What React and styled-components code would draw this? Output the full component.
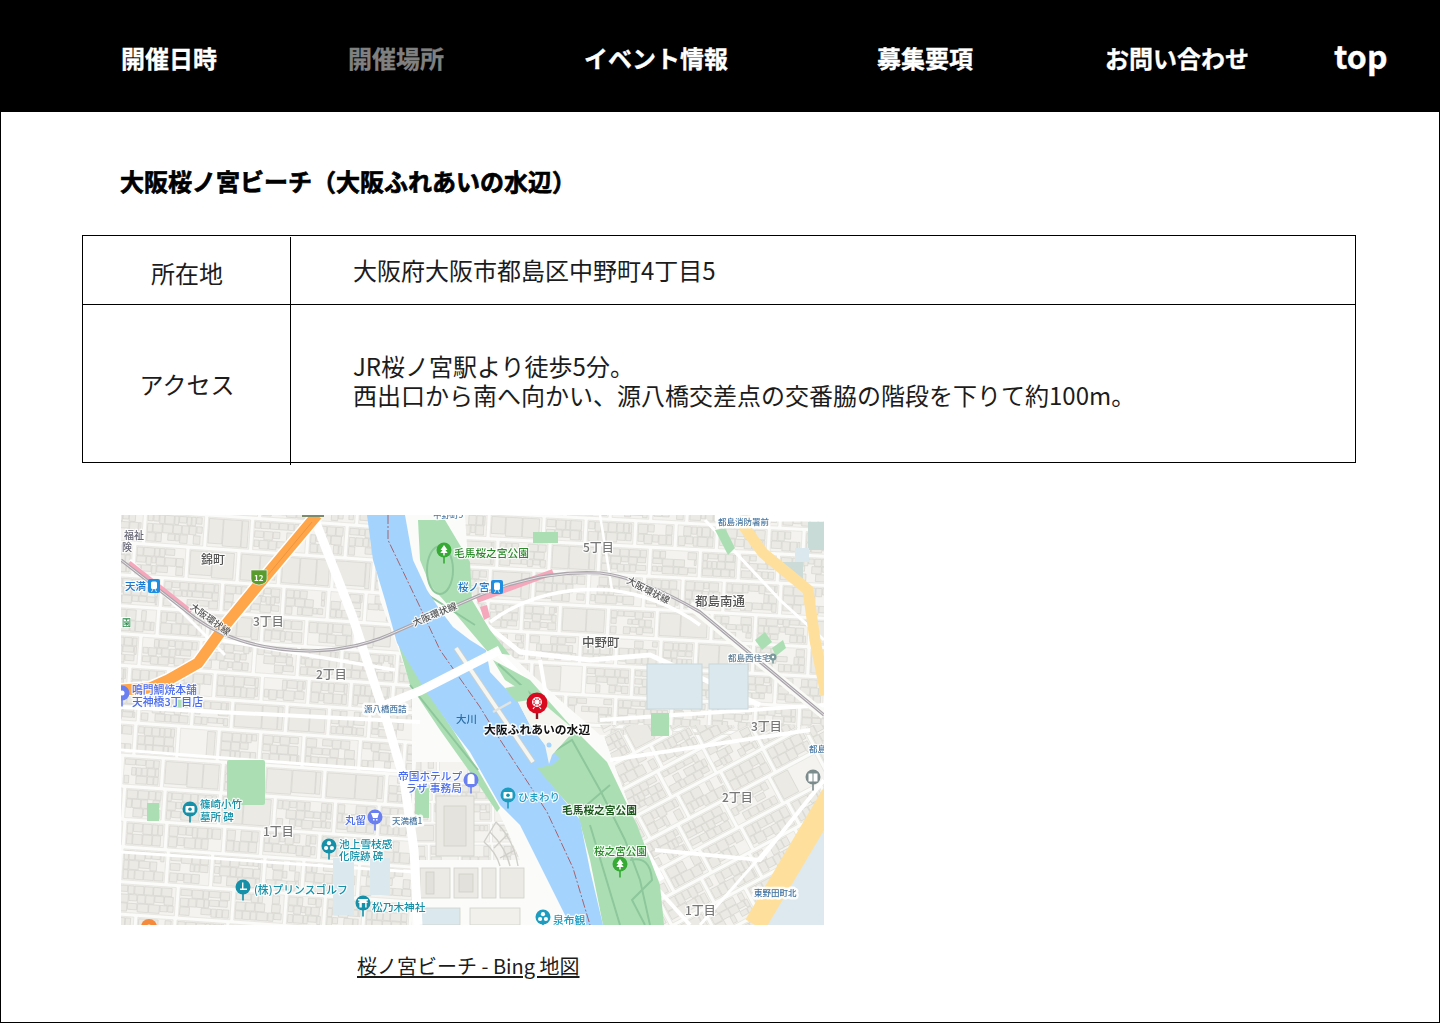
import React, { useMemo } from "react";
import styled, { createGlobalStyle } from "styled-components";

const FONT = `"Noto Sans CJK JP", "Noto Sans", sans-serif`;

const Global = createGlobalStyle`
  html, body { margin: 0; padding: 0; background: #fff; }
  body { font-family: ${FONT}; color: #000; }
`;

const Page = styled.div`
  box-sizing: border-box;
  width: 1440px;
  height: 1023px;
  border: solid #000;
  border-width: 0 1px 1px 1px;
  overflow: hidden;
`;

const Nav = styled.nav`
  display: grid;
  grid-template-columns: 227px 236px 293px 228px 229px 1fr;
  align-items: center;
  height: 112px;
  margin: 0 -1px;
  padding: 3px 0 0 121px;
  box-sizing: border-box;
  background: #000;
`;

const NavLink = styled.a`
  font-size: ${(p) => (p.$large ? "32px" : "24px")};
  font-weight: 700;
  line-height: 36px;
  white-space: nowrap;
  margin-top: ${(p) => (p.$large ? "-5px" : "0")};
  color: ${(p) => (p.$current ? "#808080" : "#fff")};
  -webkit-text-stroke: 0.3px ${(p) => (p.$current ? "#808080" : "#fff")};
`;

const Title = styled.h2`
  margin: 51px 0 37px 119px;
  font-size: 24px;
  font-weight: 700;
  line-height: 35px;
  -webkit-text-stroke: 0.7px #000;
`;

const InfoTable = styled.section`
  position: relative;
  box-sizing: border-box;
  width: 1274px;
  margin-left: 81px;
  border: 1px solid #000;

  &::before {
    content: "";
    position: absolute;
    left: 207px;
    top: 1px;
    bottom: -3px;
    width: 1px;
    background: #000;
  }
`;

const InfoRow = styled.div`
  display: grid;
  grid-template-columns: 208px 1fr;
  height: ${(p) => p.$h}px;
  & + & { border-top: 1px solid #000; }
`;

const InfoLabel = styled.div`
  display: flex;
  align-items: center;
  justify-content: center;
  padding: ${(p) => p.$offset || 0}px 0 ${(p) => p.$lift || 0}px;
  font-size: 24px;
  line-height: 29px;
  font-weight: 400;
  color: #1c1c1c;
`;

const InfoValue = styled.div`
  display: flex;
  flex-direction: column;
  justify-content: center;
  padding: 0 0 ${(p) => p.$lift || 0}px 62px;
  font-size: 24px;
  line-height: 29px;
  font-weight: 400;
  color: #1c1c1c;
`;

const MapFigure = styled.figure`
  margin: 52px 0 0 120px;
`;

const MapFrame = styled.svg`
  display: block;
  width: 703px;
  height: 410px;
  filter: blur(0.35px);
`;

const MapLabel = styled.text`
  font-family: ${FONT};
  font-size: ${(p) => p.$s || 11}px;
  font-weight: ${(p) => p.$w || 500};
  fill: ${(p) => p.$c || "#555"};
  stroke: #fff;
  stroke-opacity: ${(p) => (p.$halo === false ? 0 : 0.85)};
  stroke-width: ${(p) => p.$sw || 2.4}px;
  paint-order: stroke;
  stroke-linejoin: round;
`;

const MapLink = styled.a`
  display: inline-block;
  margin: 26px 0 0 236px;
  font-size: 20px;
  line-height: 30px;
  font-weight: 400;
  color: #1c1c1c;
  text-decoration: underline;
  text-underline-offset: 2px;
`;

function rng(seed) {
  let a = seed;
  return () => {
    a |= 0; a = (a + 0x6d2b79f5) | 0;
    let t = Math.imul(a ^ (a >>> 15), 1 | a);
    t = (t + Math.imul(t ^ (t >>> 7), 61 | t)) ^ t;
    return ((t ^ (t >>> 14)) >>> 0) / 4294967296;
  };
}

const rect = (x, y, w, h) =>
  `M${x.toFixed(1)} ${y.toFixed(1)}h${w.toFixed(1)}v${h.toFixed(1)}h${(-w).toFixed(1)}z`;

function buildZone({ x0, y0, x1, y1, bw, bh, gap, seed, dense = 1 }) {
  const r = rng(seed);
  let blocks = "";
  let houses = "";
  for (let y = y0; y < y1; ) {
    const h = bh * (0.8 + r() * 0.4);
    for (let x = x0 + r() * 12 - 6; x < x1; ) {
      const w = bw * (0.72 + r() * 0.55);
      blocks += rect(x, y, w, h);
      const large = r() < 0.12;
      const rowsN = large ? 1 : h > 25 ? 3 : 2;
      const rh = (h - 2) / rowsN;
      for (let i = 0; i < rowsN; i++) {
        for (let cx = x + 1; cx < x + w - 3; ) {
          const cw = Math.min((large ? 14 : 4.5) + r() * (large ? 16 : 7), x + w - cx - 1);
          if (r() < 0.9 * dense) {
            houses += rect(cx, y + 1 + i * rh + 0.3, cw - 0.7, rh - 0.7 - (r() < 0.3 ? 2 : 0));
          }
          cx += cw;
        }
      }
      x += w + gap;
    }
    y += h + gap;
  }
  return { blocks, houses };
}

const ZONES = [
  { id: "zw", clip: "121,515 370,515 380,600 398,648 412,690 412,925 121,925", rot: "4 260 720",
    x0: 90, y0: 490, x1: 440, y1: 960, bw: 46, bh: 27, gap: 4, seed: 11 },
  { id: "ze", clip: "465,515 824,515 824,735 600,735 560,700 500,645 470,590", rot: "3 640 620",
    x0: 440, y0: 495, x1: 860, y1: 760, bw: 42, bh: 25, gap: 4, seed: 27 },
  { id: "zr", clip: "600,725 824,725 824,925 664,925 640,835", rot: "-28 720 830",
    x0: 520, y0: 660, x1: 940, y1: 1010, bw: 40, bh: 27, gap: 4, seed: 73 },
  { id: "zs", clip: "416,762 470,762 500,815 520,860 412,860", rot: "0 470 800",
    x0: 412, y0: 760, x1: 520, y1: 870, bw: 24, bh: 20, gap: 3, seed: 91, dense: 0.8 },
];

const STREETS = [
  { d: "M313 515 L352 615 L388 725 L404 780 L414 850 L418 925", w: 9 },
  { d: "M121 707 L300 716 L420 722", w: 4 },
  { d: "M121 750 L410 772", w: 3 },
  { d: "M121 852 L415 872", w: 3 },
  { d: "M220 640 L395 670", w: 3.5 },
  { d: "M130 560 L225 655", w: 3 },
  { d: "M480 620 L520 652 L590 660 L650 655 L760 705", w: 5 },
  { d: "M490 622 Q540 585 610 590 Q660 596 700 625", w: 3.5 },
  { d: "M500 655 L585 745 L662 880", w: 6 },
  { d: "M540 660 L560 780 L690 925", w: 4 },
  { d: "M600 720 L824 705", w: 4 },
  { d: "M610 760 L810 730", w: 4 },
  { d: "M655 850 L760 860 L824 780", w: 4 },
  { d: "M700 925 L775 840", w: 3 },
  { d: "M705 520 L780 600 L824 640", w: 3 },
  { d: "M600 515 L612 590", w: 2.5 },
  { d: "M715 515 L835 515", w: 13 },
];

const LABELS = [
  { x: 124, y: 539, t: "福祉", c: "#667", s: 10 },
  { x: 122, y: 551, t: "険", c: "#667", s: 10 },
  { x: 201, y: 564, t: "錦町", s: 12, c: "#555" },
  { x: 125, y: 590, t: "天満", s: 10.5, c: "#1f78cf" },
  { x: 253, y: 626, t: "3丁目", s: 12, c: "#777" },
  { x: 316, y: 679, t: "2丁目", s: 12, c: "#777" },
  { x: 132, y: 694, t: "鳴門鯛焼本舗", s: 10.8, c: "#4a6bf0" },
  { x: 132, y: 706, t: "天神橋3丁目店", s: 10.8, c: "#4a6bf0" },
  { x: 364, y: 712, t: "源八橋西詰", s: 8.5, c: "#4c7aa5", sw: 5 },
  { x: 456, y: 723, t: "大川", s: 10.5, c: "#2c6ea5", halo: false },
  { x: 454, y: 557, t: "毛馬桜之宮公園", s: 10.7, c: "#2a8a2a" },
  { x: 458, y: 591, t: "桜ノ宮", s: 10.5, c: "#1f78cf" },
  { x: 433, y: 518, t: "中野町5", s: 8.5, c: "#4c7aa5" },
  { x: 583, y: 552, t: "5丁目", s: 12, c: "#777" },
  { x: 718, y: 525, t: "都島消防署前", s: 8.5, c: "#4c7aa5", sw: 5 },
  { x: 695, y: 606, t: "都島南通", s: 12.5, c: "#555" },
  { x: 582, y: 647, t: "中野町", s: 12.5, c: "#555" },
  { x: 728, y: 661, t: "都島西住宅", s: 8.5, c: "#5f7f98" },
  { x: 751, y: 731, t: "3丁目", s: 12, c: "#777" },
  { x: 809, y: 752, t: "都島", s: 8.5, c: "#4c7aa5" },
  { x: 722, y: 802, t: "2丁目", s: 12, c: "#777" },
  { x: 685, y: 915, t: "1丁目", s: 12, c: "#777" },
  { x: 263, y: 836, t: "1丁目", s: 12, c: "#777" },
  { x: 484, y: 734, t: "大阪ふれあいの水辺", s: 11.8, c: "#111", w: 700, sw: 3 },
  { x: 398, y: 780, t: "帝国ホテルプ", s: 10.7, c: "#4a6bf0" },
  { x: 406, y: 792, t: "ラザ 事務局", s: 10.7, c: "#4a6bf0" },
  { x: 518, y: 801, t: "ひまわり", s: 10.5, c: "#1d9cc0" },
  { x: 562, y: 814, t: "毛馬桜之宮公園", s: 10.7, c: "#1b561b", w: 700 },
  { x: 594, y: 855, t: "桜之宮公園", s: 10.6, c: "#2a8a2a" },
  { x: 754, y: 896, t: "東野田町北", s: 8.5, c: "#3d70a3", sw: 5 },
  { x: 553, y: 924, t: "泉布観", s: 10.7, c: "#1d9cc0" },
  { x: 200, y: 808, t: "篠崎小竹", s: 10.5, c: "#1590a8" },
  { x: 200, y: 821, t: "墓所 碑", s: 10.5, c: "#1590a8" },
  { x: 345, y: 824, t: "丸留", s: 10.5, c: "#4a6bf0" },
  { x: 392, y: 824, t: "天満橋1", s: 8.5, c: "#4c7aa5", sw: 5 },
  { x: 339, y: 848, t: "池上雪枝感", s: 10.7, c: "#1590a8" },
  { x: 339, y: 860, t: "化院跡 碑", s: 10.5, c: "#1590a8" },
  { x: 254, y: 894, t: "(株)プリンスゴルフ", s: 10.8, c: "#1590a8" },
  { x: 372, y: 911, t: "松乃木神社", s: 10.7, c: "#1590a8" },
];

const RAIL_NAMES = [
  { x: 210, y: 620, a: 36 },
  { x: 435, y: 615, a: -22 },
  { x: 648, y: 591, a: 27 },
];

const PINS = [
  { x: 444, y: 550, r: 7.5, c: "#37a935", kind: "tree" },
  { x: 620, y: 864, r: 7.5, c: "#37a935", kind: "tree" },
  { x: 471, y: 780, r: 7.5, c: "#6b80f0", kind: "house" },
  { x: 375, y: 817, r: 7.5, c: "#6b80f0", kind: "cart" },
  { x: 122, y: 693, r: 7.5, c: "#6b80f0", kind: "dot" },
  { x: 508, y: 795, r: 7.5, c: "#1d9cc0", kind: "cam" },
  { x: 190, y: 809, r: 7.5, c: "#1590a8", kind: "cam" },
  { x: 329, y: 846, r: 7.5, c: "#1590a8", kind: "clover" },
  { x: 543, y: 917, r: 7.5, c: "#1d9cc0", kind: "clover" },
  { x: 243, y: 887, r: 7.5, c: "#1590a8", kind: "golf" },
  { x: 363, y: 903, r: 7.5, c: "#1590a8", kind: "gate" },
  { x: 813, y: 777, r: 7.5, c: "#7c8b8c", kind: "book" },
  { x: 149, y: 927, r: 8, c: "#f58a3c", kind: "dot" },
  { x: 773, y: 657, r: 3.5, c: "#7c9a9c", kind: "none", stem: 3 },
];

function PinGlyph({ kind, x, y }) {
  switch (kind) {
    case "tree":
      return <path d={`M${x} ${y - 5}l3.5 5h-2l2.2 3h-3v2.5h-1.4V${y + 3}h-3l2.2-3h-2z`} fill="#fff" />;
    case "house":
      return <path d={`M${x - 3.5} ${y + 4}v-6a3.5 4 0 0 1 7 0v6z`} fill="#fff" />;
    case "cart":
      return <path d={`M${x - 4} ${y - 4}h8l-1.5 5h-4.5zM${x - 2} ${y + 2}h1.5v1.5h-1.5zM${x + 1} ${y + 2}h1.5v1.5h-1.5z`} fill="#fff" />;
    case "cam":
      return (
        <g>
          <rect x={x - 4.5} y={y - 3} width="9" height="6.5" rx="1" fill="#fff" />
          <circle cx={x} cy={y + 0.2} r="1.8" fill="#1590a8" />
        </g>
      );
    case "clover":
      return (
        <g fill="#fff">
          <circle cx={x} cy={y - 2.8} r="2.1" />
          <circle cx={x - 2.9} cy={y + 2} r="2.1" />
          <circle cx={x + 2.9} cy={y + 2} r="2.1" />
        </g>
      );
    case "golf":
      return <path d={`M${x - 1} ${y - 4.5}h1.4v6h3.6v1.6h-7v-1.6h2z`} fill="#fff" />;
    case "gate":
      return <path d={`M${x - 5} ${y - 4}h10v1.4h-1.4v1.4h1v1.2h-1v4.5h-1.4V${y}h-3.4v4.5H${x - 3.6}V${y}h-1v-1.2h1v-1.4H${x - 5}z`} fill="#fff" />;
    case "book":
      return <path d={`M${x - 4.5} ${y - 3.5}h4v8h-4zM${x + 0.5} ${y - 3.5}h4v8h-4z`} fill="#fff" />;
    case "dot":
      return <circle cx={x} cy={y} r="2.5" fill="#fff" />;
    default:
      return <circle cx={x} cy={y} r="1.2" fill="#fff" />;
  }
}

const RAIL = "M121 560 L195 618 Q240 650 310 651 Q360 650 400 630 L480 595 Q540 570 600 573 Q640 577 700 612 L824 715";

function MapDrawing() {
  const zones = useMemo(() => ZONES.map((z) => ({ ...z, ...buildZone(z) })), []);
  return (
    <MapFrame viewBox="121 515 703 410" role="img" aria-label="桜ノ宮ビーチ周辺の地図">
      <defs>
        {zones.map((z) => (
          <clipPath id={z.id} key={z.id}>
            <polygon points={z.clip} />
          </clipPath>
        ))}
        <clipPath id="mapClip">
          <rect x="121" y="515" width="703" height="410" />
        </clipPath>
      </defs>
      <g clipPath="url(#mapClip)">
        <rect x="121" y="515" width="703" height="410" fill="#fbfbf9" />

        {zones.map((z) => (
          <g clipPath={`url(#${z.id})`} key={z.id}>
            <g transform={`rotate(${z.rot})`}>
              <path d={z.blocks} fill="#f4f3ef" stroke="#e0dfda" strokeWidth="0.6" />
              <path d={z.houses} fill="#ebeae5" stroke="#d3d2cc" strokeWidth="0.6" />
            </g>
          </g>
        ))}

        {/* hotel and business park south of the bridge */}
        <g fill="#eceae5" stroke="#d0cfc9" strokeWidth="0.8">
          <rect x="436" y="796" width="38" height="60" />
          <rect x="444" y="806" width="22" height="40" fill="#e4e3dd" />
          <rect x="420" y="868" width="30" height="30" />
          <rect x="454" y="868" width="24" height="30" />
          <rect x="482" y="868" width="14" height="30" />
          <rect x="500" y="868" width="24" height="30" />
          <rect x="426" y="872" width="8" height="22" fill="#e2e1db" />
          <rect x="459" y="874" width="14" height="18" fill="#e2e1db" />
          <rect x="420" y="908" width="40" height="17" fill="#dbe8ee" />
          <rect x="470" y="908" width="50" height="17" fill="#f1f0eb" />
        </g>
        <g fill="none" stroke="#d0cfc9" strokeWidth="1.4">
          <path d="M496 822 Q514 840 518 866" />
          <path d="M490 832 Q506 848 510 866" />
          <path d="M484 842 Q496 852 500 866" />
          <path d="M496 822 L484 842 M508 834 L494 848 M515 850 L500 858" />
        </g>

        {STREETS.map((s, i) => (
          <path key={i} d={s.d} fill="none" stroke="#fff" strokeWidth={s.w} />
        ))}

        {/* ponds and tinted blocks */}
        <rect x="647" y="664" width="55" height="45" fill="#dbe8ee" stroke="#c9d6da" />
        <rect x="709" y="664" width="39" height="45" fill="#dbe8ee" stroke="#c9d6da" />
        <rect x="333" y="858" width="21" height="57" fill="#dbe8ee" />
        <rect x="370" y="858" width="20" height="37" fill="#dbe8ee" />
        <polygon points="790,860 824,830 824,925 765,925" fill="#dde9ee" />
        <polygon points="780,562 803,562 803,590 780,570" fill="#cddbd8" />
        <rect x="808" y="522" width="16" height="28" fill="#c9dbd6" />
        <rect x="795" y="548" width="14" height="14" fill="#dbe8ee" />

        {/* parks */}
        <g fill="#abdfb3">
          <polygon points="418,520 445,520 470,562 472,600 490,630 510,655 488,652 465,625 448,605 430,585 420,560" />
          <polygon points="396,636 420,680 453,730 478,770 500,808 497,812 472,775 440,730 410,685" />
          <polygon points="493,660 530,680 570,725 607,762 637,825 660,885 664,925 603,925 590,860 578,815 535,768 552,755 570,735 545,705 505,680" />
          <rect x="227" y="760" width="38" height="45" rx="2" />
          <rect x="147" y="803" width="12" height="18" />
          <rect x="651" y="713" width="18" height="23" />
          <rect x="533" y="532" width="25" height="11" />
          <rect x="415" y="788" width="14" height="30" />
          <rect x="177" y="700" width="11" height="7" />
          <polygon points="715,530 725,528 735,548 728,555" />
          <polygon points="772,648 783,640 786,648 776,656" />
          <polygon points="755,640 765,632 772,642 762,650" />
        </g>
        <g fill="none" stroke="#8ec79c" strokeWidth="2">
          <path d="M540 760 L572 740 L600 790 L625 840 L640 880 L650 925" />
          <path d="M575 815 L610 785" />
          <path d="M590 825 L620 925" />
          <path d="M630 860 Q650 855 652 880 L632 900 L645 925" />
          <ellipse cx="440" cy="570" rx="13" ry="24" />
          <path d="M420 590 L475 625" />
          <path d="M498 664 L570 730" />
          <path d="M410 685 L478 770" />
        </g>

        {/* river */}
        <polygon
          fill="#a4d4fd"
          points="367,515 373,560 385,600 397,643 425,690 453,730 470,752 500,805 520,825 540,865 560,905 570,925 603,925 590,870 580,820 560,795 537,768 552,765 560,758 545,745 530,725 517,700 505,688 490,672 486,650 470,640 453,627 440,610 427,590 413,560 405,515"
        />
        {/* beach */}
        <polygon points="517,700 530,703 545,705 570,726 570,735 552,755 549,764 545,745 530,725" fill="#f6f6f0" />
        <circle cx="549" cy="745" r="2.5" fill="#a4d4fd" />
        <polygon points="505,688 527,684 530,700 516,702" fill="#abdfb3" />
        {/* pier */}
        <path d="M456 648 L533 762" stroke="#cfcfca" strokeWidth="5.4" fill="none" />
        <path d="M456 648 L533 762" stroke="#f5f5f1" strokeWidth="3.8" fill="none" />
        <path d="M493 712 L511 702" stroke="#e3e3df" strokeWidth="2.4" fill="none" />
        <path d="M388 515 L388 540 L420 607 L440 650 L480 707 L497 735 L547 812 L573 868 L590 925"
          fill="none" stroke="#a8626c" strokeWidth="1" strokeDasharray="9 2 2 2" />
        {/* bridge */}
        <path d="M385 705 L420 691 L500 650" stroke="#fff" strokeWidth="9" fill="none" />

        {/* roads on top */}
        <path d="M745 515 L745 528 L763 553 L808 590 L815 640 L826 695" fill="none" stroke="#fee09c" strokeWidth="11" />
        <path d="M755 925 L835 790" fill="none" stroke="#fee09c" strokeWidth="22" />
        <path d="M317 515 L265 577 L227 623 L198 663 L168 680 L150 688 L121 690" fill="none" stroke="#fff" strokeWidth="14" />
        <path d="M317 515 L265 577 L227 623 L198 663 L168 680 L150 688 L121 690" fill="none" stroke="#ffa54a" strokeWidth="11" />
        <path d="M312 522 L262 582" fill="none" stroke="#e98f3a" strokeWidth="0.8" />
        <rect x="302" y="515" width="22" height="2" fill="#7c8b6a" />

        {/* rail */}
        <path d="M129 563 L191 612" stroke="#f5a8bb" strokeWidth="5" fill="none" />
        <path d="M477 600 L553 572" stroke="#f5a8bb" strokeWidth="6" fill="none" />
        <polygon points="480,607 487,605 490,617 484,620" fill="#f5a8bb" />
        <path d="M690 605 L824 715" fill="none" stroke="#fafaf7" strokeWidth="9" />
        <path d={RAIL} fill="none" stroke="#aaa6ac" strokeWidth="3.2" />
        <path d={RAIL} fill="none" stroke="#e6e3e6" strokeWidth="1" />

        {/* station / shield / green label chips */}
        <rect x="148" y="579" width="12" height="14" rx="2" fill="#1f8ee0" />
        <rect x="151" y="581.5" width="6" height="7.5" rx="1.5" fill="#fff" />
        <path d="M151.5 592l1.5-3M156.5 592l-1.5-3" stroke="#fff" strokeWidth="0.8" />
        <rect x="491" y="580" width="12" height="14" rx="2" fill="#1f8ee0" />
        <rect x="494" y="582.5" width="6" height="7.5" rx="1.5" fill="#fff" />
        <path d="M494.5 593l1.5-3M499.5 593l-1.5-3" stroke="#fff" strokeWidth="0.8" />
        <path d="M251 570h16v9q0 5 -8 6q-8 -1 -8 -6z" fill="#5a9b2e" stroke="#fff" strokeWidth="0.6" />
        <MapLabel x="254" y="581" $s={8} $c="#fff" $w={700} $halo={false}>12</MapLabel>
        <rect x="121" y="617" width="10" height="11" fill="#fff" />
        <MapLabel x="122" y="626" $s={9} $c="#2a8a4a" $halo={false}>園</MapLabel>

        {LABELS.map((l, i) => (
          <MapLabel key={i} x={l.x} y={l.y} $s={l.s} $c={l.c} $w={l.w} $sw={l.sw} $halo={l.halo}>
            {l.t}
          </MapLabel>
        ))}
        {RAIL_NAMES.map((n, i) => (
          <MapLabel key={i} x={n.x} y={n.y} textAnchor="middle" dominantBaseline="middle"
            transform={`rotate(${n.a} ${n.x} ${n.y})`} $s={9.4} $c="#555">
            大阪環状線
          </MapLabel>
        ))}

        {PINS.map((p, i) => (
          <g key={i}>
            <path d={`M${p.x} ${p.y}V${p.y + p.r + (p.stem ?? 6)}`} stroke={p.c} strokeWidth="1.6" />
            <circle cx={p.x} cy={p.y} r={p.r} fill={p.c} />
            <PinGlyph kind={p.kind} x={p.x} y={p.y} />
          </g>
        ))}

        {/* destination pin */}
        <path d="M537 703V719" stroke="#8d1420" strokeWidth="2.4" />
        <circle cx="537" cy="703" r="10.5" fill="#d90a1f" />
        <g fill="none" stroke="#fff" strokeWidth="1.1">
          <circle cx="537" cy="702" r="4.4" />
          <circle cx="537" cy="702" r="1.3" />
          <path d="M537 697.6V706.4M532.6 702H541.4M533.9 698.9L540.1 705.1M540.1 698.9L533.9 705.1M534.5 707L533 709M539.5 707L541 709" />
        </g>
      </g>
    </MapFrame>
  );
}

const NAV_ITEMS = [
  { label: "開催日時" },
  { label: "開催場所", current: true },
  { label: "イベント情報" },
  { label: "募集要項" },
  { label: "お問い合わせ" },
  { label: "top", large: true },
];

export default function App() {
  return (
    <>
      <Global />
      <Page>
        <Nav>
          {NAV_ITEMS.map((item) => (
            <NavLink key={item.label} $current={item.current} $large={item.large}>
              {item.label}
            </NavLink>
          ))}
        </Nav>
        <Title>大阪桜ノ宮ビーチ（大阪ふれあいの水辺）</Title>
        <InfoTable>
          <InfoRow $h={68}>
            <InfoLabel $offset={4}>所在地</InfoLabel>
            <InfoValue $lift={2}>大阪府大阪市都島区中野町4丁目5</InfoValue>
          </InfoRow>
          <InfoRow $h={157}>
            <InfoLabel $lift={1}>アクセス</InfoLabel>
            <InfoValue $lift={7}>
              <span>JR桜ノ宮駅より徒歩5分。</span>
              <span>西出口から南へ向かい、源八橋交差点の交番脇の階段を下りて約100m。</span>
            </InfoValue>
          </InfoRow>
        </InfoTable>
        <MapFigure>
          <MapDrawing />
          <MapLink>桜ノ宮ビーチ - Bing 地図</MapLink>
        </MapFigure>
      </Page>
    </>
  );
}
